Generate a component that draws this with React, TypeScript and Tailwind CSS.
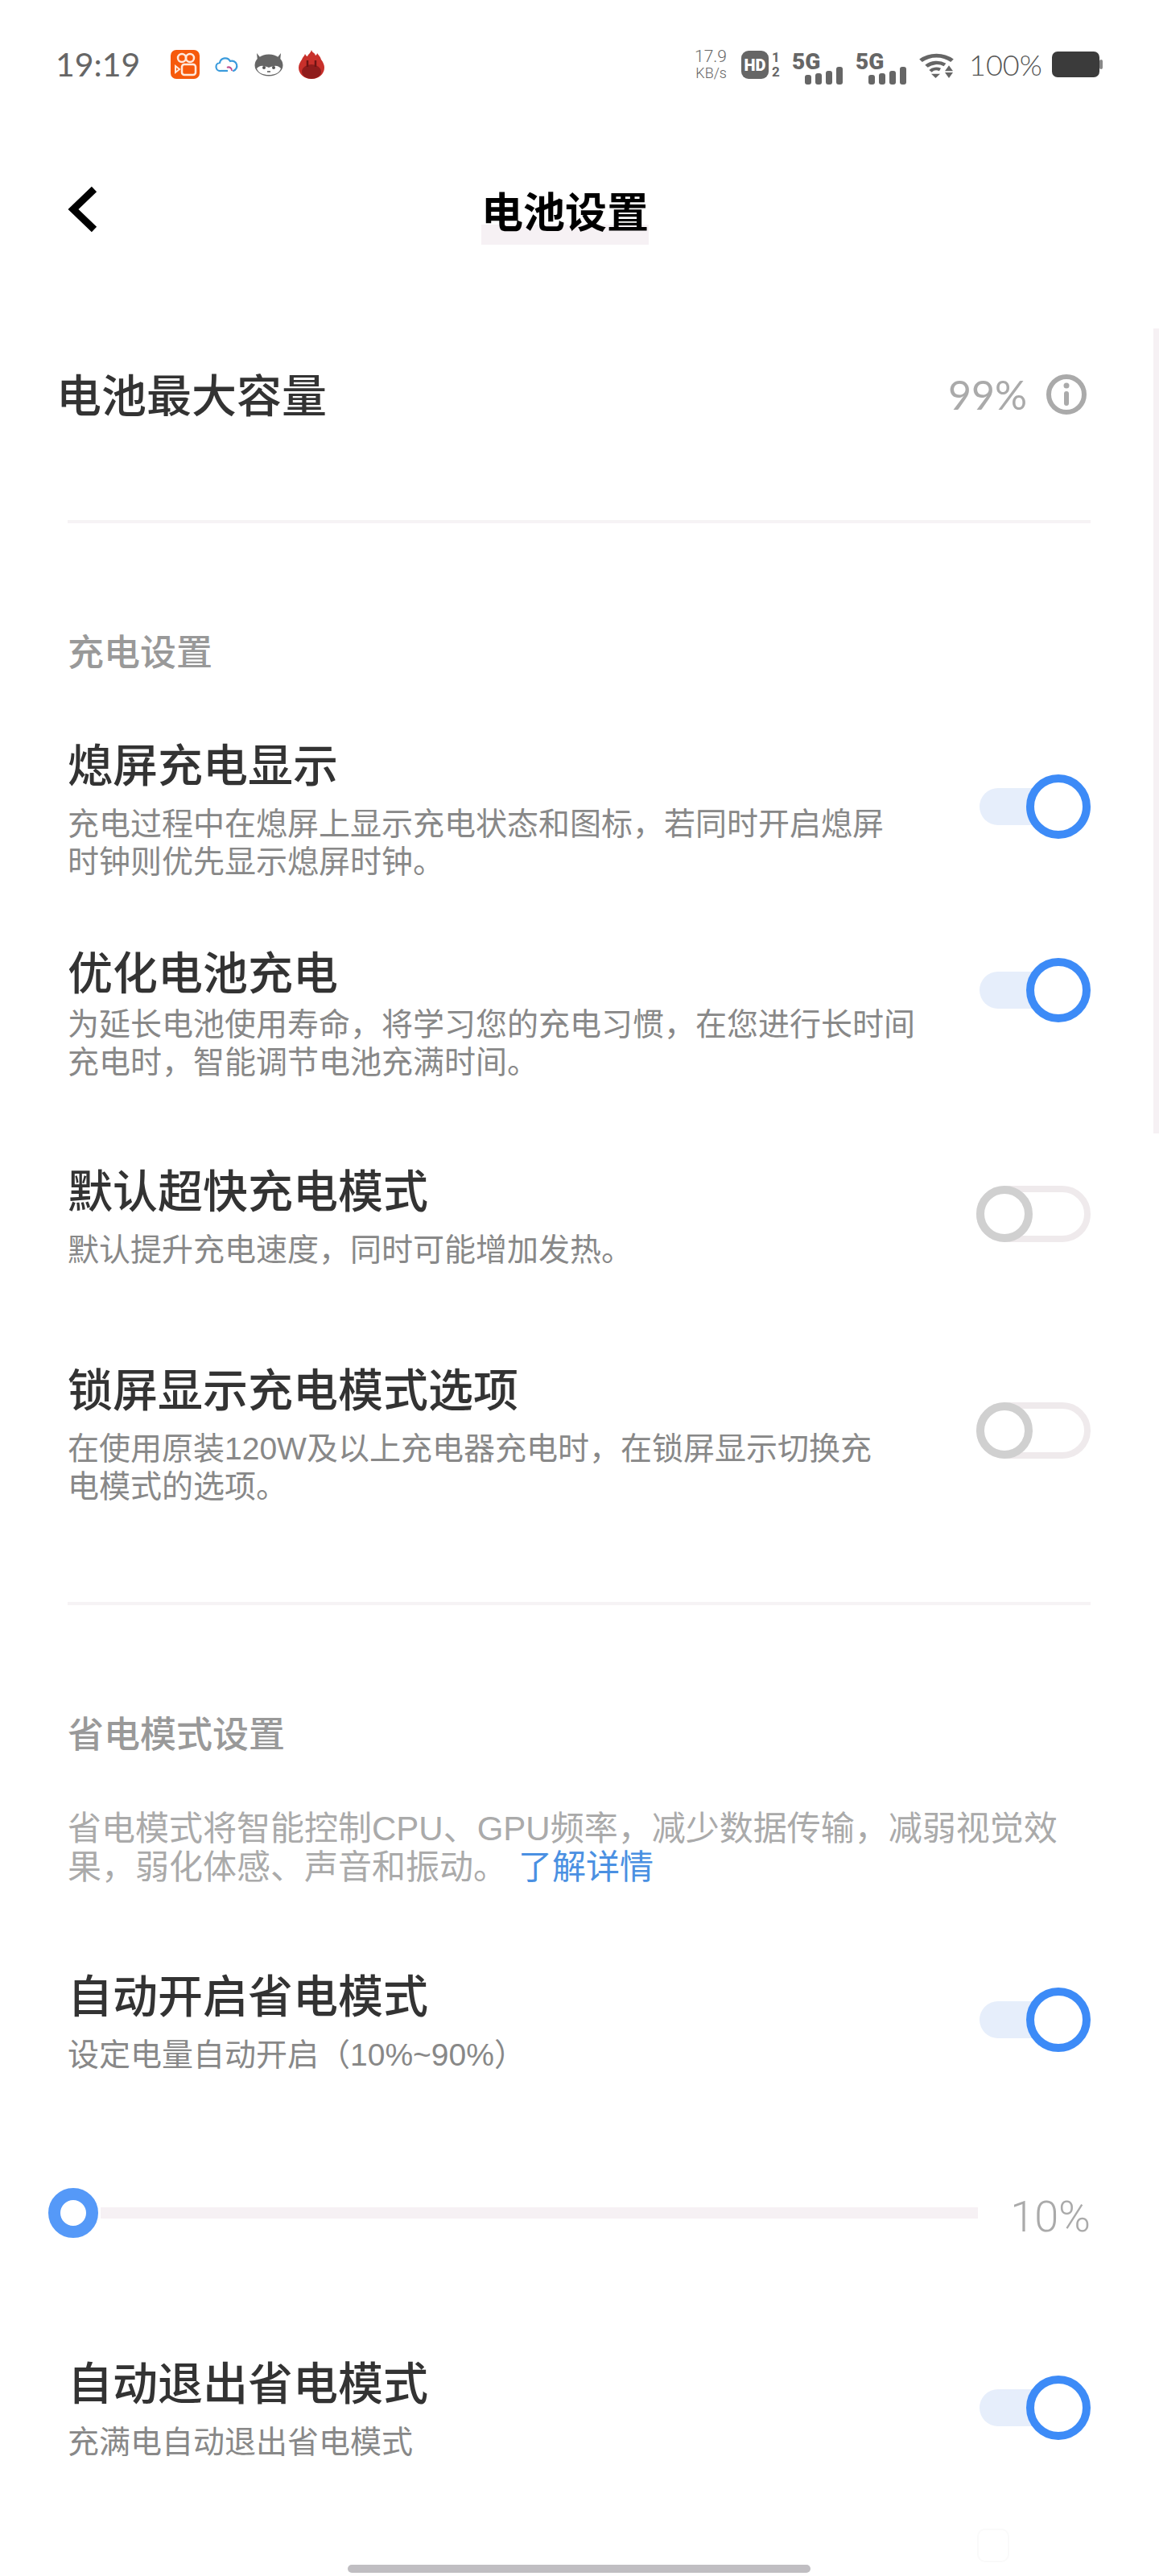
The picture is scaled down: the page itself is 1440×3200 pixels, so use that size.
import React from 'react';

const CJK = "font-['Liberation_Sans','Noto_Sans_CJK_SC',sans-serif]";

// on/off switch from the settings rows
const Toggle: React.FC<{ on: boolean }> = ({ on }) => {
    if (on) {
        return (
            <div className="relative w-[138px] h-[80px] flex items-center">
                <div className="w-[90px] h-[46px] rounded-full bg-[#e6eefb]"></div>
                <div className="absolute right-0 top-0 w-[80px] h-[80px] rounded-full border-[10px] border-[#3d8bf7] bg-white"></div>
            </div>
        );
    }
    return (
        <div className="relative w-[142px] h-[70px] rounded-full border-[8px] border-[#efeaec] bg-white">
            <div className="absolute left-[-8px] top-[-8px] w-[70px] h-[70px] rounded-full border-[10px] border-[#d0d0d0] bg-white"></div>
        </div>
    );
};

interface RowProps {
    title: string;
    lines: string[];
    on: boolean;
    height: string;
    toggleOffset: string;
    titleGap?: string;
}

const SettingRow: React.FC<RowProps> = ({ title, lines, on, height, toggleOffset, titleGap = 'mb-[10px]' }) => (
    <div className={`flex justify-between items-start pl-[84px] pr-[85px] ${height}`}>
        <div className="flex flex-col pt-[2px]">
            <div className={`text-[56px] leading-[76px] font-medium text-[#333333] ${titleGap}`}>{title}</div>
            {lines.map(line => (
                <div key={line} className="text-[39px] leading-[47px] text-[#888888] whitespace-nowrap">{line}</div>
            ))}
        </div>
        <div className={toggleOffset}>
            <Toggle on={on} />
        </div>
    </div>
);

const SignalIcon: React.FC = () => (
    <svg width="63" height="45" viewBox="0 0 63 45" className="mt-[4px]">
        <text x="0" y="26" fontFamily="Roboto, sans-serif" fontWeight="900" fontSize="28" fill="#666666">5G</text>
        <rect x="16" y="33" width="8" height="12" rx="3" fill="#666666" />
        <rect x="29" y="31" width="8" height="14" rx="3" fill="#666666" />
        <rect x="42" y="28" width="8" height="17" rx="3" fill="#666666" />
        <rect x="55" y="23" width="8" height="22" rx="3" fill="#666666" />
    </svg>
);

const StatusBar: React.FC = () => (
    <div className="h-[160px] pl-[69px] pr-[70px] flex items-center justify-between">
        <div className="flex items-center">
            <span className="font-['Lato',sans-serif] text-[41px] leading-[46px] text-[#666666] w-[143px]">19:19</span>
            <div className="flex items-center gap-[19px]">
                <svg width="36" height="36" viewBox="0 0 36 36">
                    <rect width="36" height="36" rx="7" fill="#f65a0c" />
                    <circle cx="14" cy="10" r="5" fill="none" stroke="#ffe9dc" strokeWidth="2.5" />
                    <circle cx="24" cy="10" r="5" fill="none" stroke="#ffe9dc" strokeWidth="2.5" />
                    <rect x="14" y="18" width="17" height="13" rx="3" fill="none" stroke="#ffe9dc" strokeWidth="2.5" />
                    <path d="M6 20l5 4-5 4z" fill="none" stroke="#ffe9dc" strokeWidth="2" />
                </svg>
                <svg width="30" height="24" viewBox="0 0 30 24">
                    <path d="M7 20a5 5 0 0 1-1-10 7 7 0 0 1 13-2 6 6 0 0 1 4 12" fill="none" stroke="#3a9bdc" strokeWidth="2.2" strokeLinecap="round" />
                    <path d="M7 20h9" stroke="#3a9bdc" strokeWidth="2.2" />
                    <path d="M15 16a4 4 0 0 1 6 4" fill="none" stroke="#c2518f" strokeWidth="2" />
                </svg>
                <svg width="36" height="30" viewBox="0 0 36 30">
                    <ellipse cx="18" cy="16" rx="17.5" ry="13.5" fill="#666666" />
                    <path d="M3 1l1 10h7zM33 1l-1 10h-7z" fill="#666666" />
                    <path d="M3 20c5-5 9-3 15-1 6-2 10-4 15 1-2 6-8 8-15 8S5 26 3 20z" fill="#ffffff" />
                    <circle cx="12" cy="19" r="2" fill="#555555" />
                    <circle cx="24" cy="19" r="2" fill="#555555" />
                    <path d="M16 24h4" stroke="#555555" strokeWidth="1.5" />
                </svg>
                <svg width="32" height="36" viewBox="0 0 32 36">
                    <path d="M16 0c1 4 4 3 5 7 2-1 2-3 2-3 2 3 4 4 5 8 3 4 4 7 4 10 0 8-7 14-16 14S0 30 0 22c0-4 2-7 4-10 1-3 3-4 4-7 1 2 2 3 3 3 1-3 4-4 5-8z" fill="#c8302b" />
                    <ellipse cx="16" cy="27" rx="12" ry="9" fill="#8f1c1c" />
                    <path d="M11 13v8M21 13v8" stroke="#6d1414" strokeWidth="2.5" />
                </svg>
            </div>
        </div>
        <div className="flex items-center">
            <div className="flex flex-col items-end w-[42px] font-['Roboto',sans-serif] font-light text-[#666666]">
                <span className="text-[21px] leading-[21px]">17.9</span>
                <span className="text-[18px] leading-[19px]">KB/s</span>
            </div>
            <svg width="34" height="35" viewBox="0 0 34 35" className="ml-[18px]">
                <rect width="34" height="35" rx="9" fill="#666666" />
                <text x="17" y="25" textAnchor="middle" fontFamily="Roboto, sans-serif" fontWeight="900" fontSize="20" fill="#ffffff">HD</text>
            </svg>
            <div className="flex flex-col items-center w-[12px] ml-[3px] mr-[14px] font-['Roboto',sans-serif] font-bold text-[17px] leading-[18px] text-[#666666]">
                <span>1</span>
                <span>2</span>
            </div>
            <SignalIcon />
            <div className="w-[16px]"></div>
            <SignalIcon />
            <svg width="43" height="33" viewBox="0 0 43 38" preserveAspectRatio="none" className="ml-[16px]">
                <path d="M2 13a30 30 0 0 1 39 0" fill="none" stroke="#666666" strokeWidth="5.500" />
                <path d="M9 21a19 19 0 0 1 23-2" fill="none" stroke="#666666" strokeWidth="5" />
                <path d="M14 28a10 10 0 0 1 12-2" fill="none" stroke="#666666" strokeWidth="4.500" />
                <path d="M15 32h11l-5.500 6z" fill="#666666" />
                <path d="M37 20l5 8h-10zM32 30h10l-5 8z" fill="#666666" />
            </svg>
            <span className="ml-[19px] w-[90px] whitespace-nowrap font-['Lato',sans-serif] font-light text-[36px] leading-[40px] text-[#555555]">100%</span>
            <svg width="63" height="32" viewBox="0 0 63 32" className="ml-[13px]">
                <rect width="59" height="32" rx="7" fill="#3b3b3b" />
                <rect x="59" y="10" width="4" height="12" rx="2" fill="#888888" />
            </svg>
        </div>
    </div>
);

export default function App() {
    return (
        <div className={`relative w-[1440px] h-[3200px] bg-white overflow-hidden ${CJK}`}>
            <StatusBar />

            {/* Header */}
            <div className="relative h-[204px] pr-[36px] flex items-center justify-center">
                <svg width="40" height="60" viewBox="0 0 40 60" className="absolute left-[82px] top-[70px]">
                    <path d="M35 5L9 30l26 25" fill="none" stroke="#000000" strokeWidth="9" />
                </svg>
                <div className="relative">
                    <div className="absolute left-0 right-0 bottom-[-9px] h-[25px] bg-[#f6f1f4]"></div>
                    <h1 className="relative pt-[6px] text-[52px] leading-[60px] font-bold text-black">电池设置</h1>
                </div>
            </div>

            {/* Capacity */}
            <div className="mt-[65px] h-[122px] pl-[70px] pr-[90px] flex items-center justify-between">
                <span className="pt-[6px] text-[56px] font-medium text-[#333333]">电池最大容量</span>
                <div className="flex items-center gap-[24px]">
                    <span className="font-['Lato',sans-serif] text-[50px] text-[#aaaaaa]">99%</span>
                    <svg width="50" height="50" viewBox="0 0 50 50">
                        <circle cx="25" cy="25" r="22" fill="none" stroke="#aaaaaa" strokeWidth="6" />
                        <circle cx="25" cy="14" r="3.500" fill="#aaaaaa" />
                        <rect x="22" y="21" width="6" height="18" rx="3" fill="#aaaaaa" />
                    </svg>
                </div>
            </div>
            <div className="mt-[95px] mx-[84px] w-[1271px] h-[4px] bg-[#f6f3f5]"></div>

            {/* Charging section */}
            <div className="mt-[132px] pl-[84px] h-[60px] text-[45px] leading-[60px] font-medium text-[#999999]">充电设置</div>
            <div className="mt-[70px]">
                <SettingRow
                    title="熄屏充电显示"
                    lines={['充电过程中在熄屏上显示充电状态和图标，若同时开启熄屏', '时钟则优先显示熄屏时钟。']}
                    on
                    height="h-[258px]"
                    toggleOffset="mt-[50px]"
                />
                <SettingRow
                    title="优化电池充电"
                    lines={['为延长电池使用寿命，将学习您的充电习惯，在您进行长时间', '充电时，智能调节电池充满时间。']}
                    on
                    height="h-[271px]"
                    toggleOffset="mt-[20px]"
                    titleGap="mb-[1px]"
                />
                <SettingRow
                    title="默认超快充电模式"
                    lines={['默认提升充电速度，同时可能增加发热。']}
                    on={false}
                    height="h-[247px]"
                    toggleOffset="mt-[32px]"
                />
                <SettingRow
                    title="锁屏显示充电模式选项"
                    lines={['在使用原装120W及以上充电器充电时，在锁屏显示切换充', '电模式的选项。']}
                    on={false}
                    height="h-[302px]"
                    toggleOffset="mt-[54px]"
                />
            </div>
            <div className="mx-[84px] w-[1271px] h-[4px] bg-[#f6f3f5]"></div>

            {/* Power saving section */}
            <div className="mt-[132px] pl-[84px] h-[60px] text-[45px] leading-[60px] font-medium text-[#999999]">省电模式设置</div>
            <div className="mt-[62px] pl-[84px] text-[42px] leading-[48px] text-[#aaaaaa]">
                <div className="whitespace-nowrap">省电模式将智能控制CPU、GPU频率，减少数据传输，减弱视觉效</div>
                <div className="whitespace-nowrap">果，弱化体感、声音和振动。<span className="ml-[14px] text-[#4a90e2]">了解详情</span></div>
            </div>
            <div className="mt-[97px]">
                <SettingRow
                    title="自动开启省电模式"
                    lines={['设定电量自动开启（10%~90%）']}
                    on
                    height="h-[276px]"
                    toggleOffset="mt-[28px]"
                />
            </div>

            {/* Slider */}
            <div className="h-[64px] pl-[60px] pr-[85px] flex items-center">
                <div className="w-[62px] h-[62px] rounded-full border-[15px] border-[#5599f8] bg-white shrink-0"></div>
                <div className="ml-[3px] w-[1090px] h-[14px] bg-[#f6f1f4]"></div>
                <span className="ml-auto mt-[8px] font-['Roboto',sans-serif] font-light text-[54px] text-[#aaaaaa]">10%</span>
            </div>

            <div className="mt-[141px]">
                <SettingRow
                    title="自动退出省电模式"
                    lines={['充满电自动退出省电模式']}
                    on
                    height="h-[160px]"
                    toggleOffset="mt-[29px]"
                />
            </div>

            {/* Scroll indicator and home bar */}
            <div className="absolute right-0 top-[408px] w-[7px] h-[1000px] bg-[#f6f1f4]"></div>
            <div className="absolute left-[1214px] top-[3141px] w-[40px] h-[42px] rounded-[10px] border-2 border-[#fafafa]"></div>
            <div className="absolute left-[432px] top-[3186px] w-[575px] h-[10px] rounded-full bg-[#c0bec2]"></div>
        </div>
    );
}
